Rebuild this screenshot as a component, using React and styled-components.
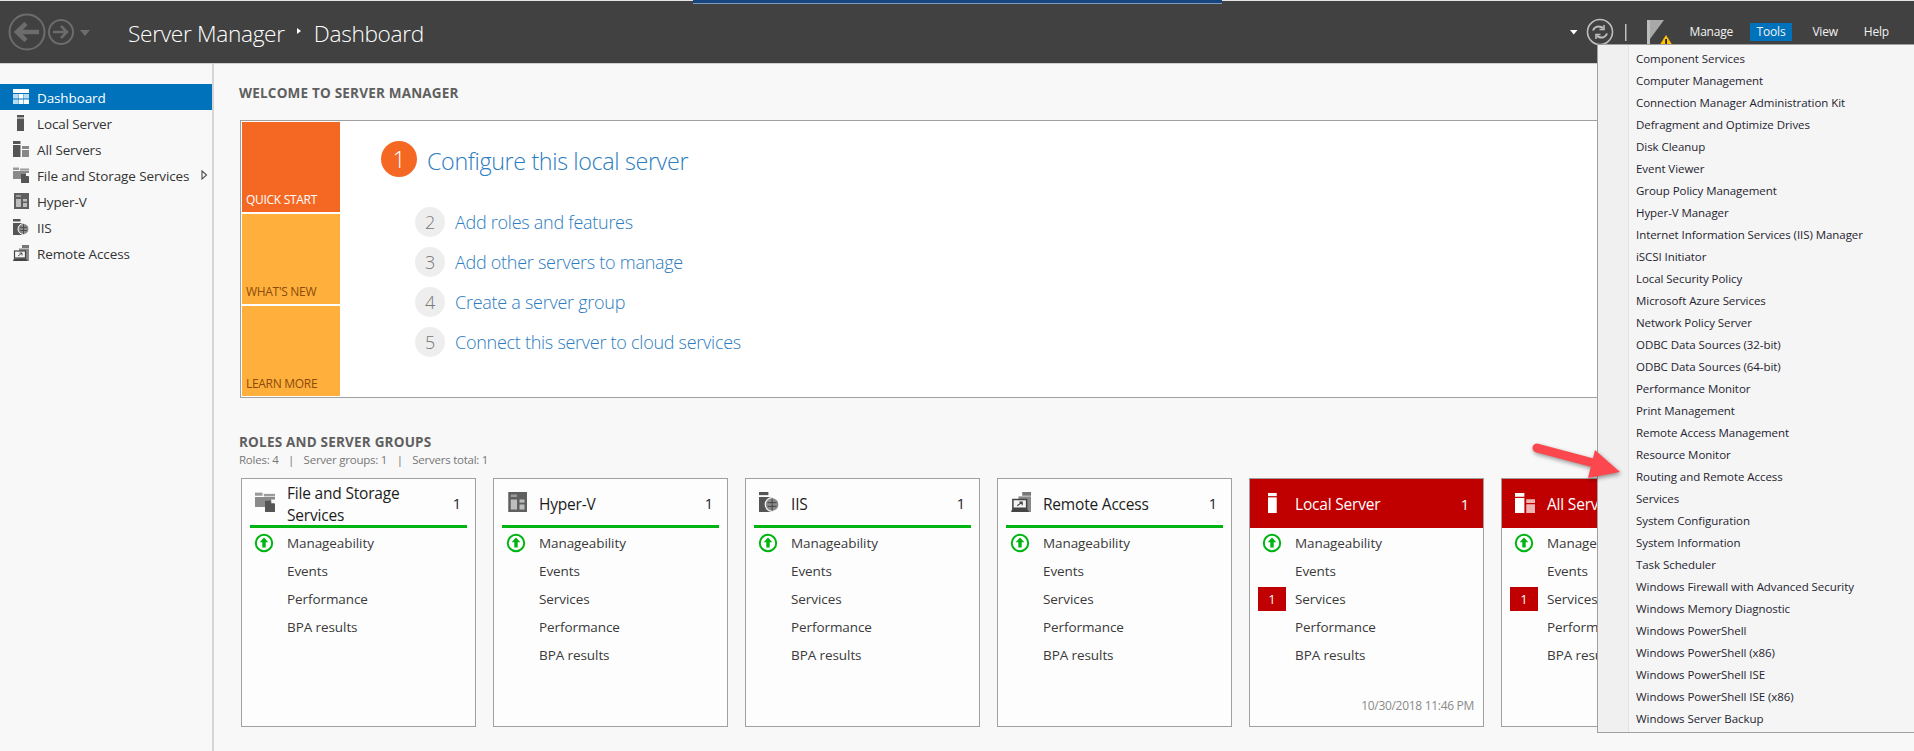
import React from "react";
import styled, { createGlobalStyle } from "styled-components";

const Global = createGlobalStyle`
  html, body { margin: 0; padding: 0; background: #f8f8f8; }
  body { font-family: "Open Sans", "Noto Sans", "Liberation Sans", sans-serif; overflow: hidden; }
`;

const Shell = styled.div`
  position: relative;
  width: 1914px;
  height: 751px;
  overflow: hidden;
  display: flex;
  flex-direction: column;
  background: #f8f8f8;
`;
const TitleStrip = styled.div`
  position: absolute;
  left: 693px;
  top: 0;
  width: 529px;
  height: 3px;
  background: #17457f;
  border-bottom: 1px solid #7f9cc0;
`;
const TopBar = styled.header`
  height: 62px;
  flex: none;
  display: flex;
  align-items: center;
  background: #414141;
  border-top: 1px solid #e4e4e4;
  border-bottom: 1px solid #d0d0d0;
`;
const NavGroup = styled.div`
  flex: none;
  width: 128px;
  height: 40px;
  svg { display: block; }
`;
const Crumbs = styled.div`
  display: flex;
  align-items: center;
  color: #fff;
  font-weight: 300;
  font-size: 22.7px;
  letter-spacing: -0.33px;
  margin-top: 2px;
`;
const CrumbArrow = styled.span`
  width: 0;
  height: 0;
  margin: -4px 13px 0 12px;
  border-left: 4px solid #fff;
  border-top: 3.5px solid transparent;
  border-bottom: 3.5px solid transparent;
`;
const RightTools = styled.div`
  margin-left: auto;
  display: flex;
  align-items: center;
  padding-right: 18px;
  svg { display: block; }
`;
const MenuButton = styled.span`
  height: 18px;
  line-height: 17px;
  padding: 0 7px;
  margin-left: ${(p) => p.$gap}px;
  font-size: 12px;
  letter-spacing: -0.2px;
  color: #f2f2f2;
  background: ${(p) => (p.$active ? "#0072bc" : "transparent")};
`;

const Body = styled.div`
  flex: 1;
  display: flex;
  min-height: 0;
`;
const Sidebar = styled.nav`
  flex: none;
  width: 212px;
  padding-top: 20px;
  background: #f8f8f8;
  border-right: 2px solid #d6d6d6;
`;
const NavItem = styled.div`
  height: 26px;
  display: flex;
  align-items: center;
  padding-left: 13px;
  gap: 8px;
  font-size: 13.5px;
  letter-spacing: -0.12px;
  color: ${(p) => (p.$active ? "#fff" : "#333")};
  background: ${(p) => (p.$active ? "#0072bc" : "transparent")};
`;
const NavIcon = styled.span`
  flex: none;
  width: 16px;
  height: 16px;
  svg { display: block; }
`;
const NavLabel = styled.span`
  margin-top: 1px;
`;
const Expand = styled.svg`
  margin-left: auto;
  margin-right: 4px;
  display: block;
`;

const Main = styled.main`
  flex: 1;
  min-width: 0;
  padding: 20px 0 0 25px;
`;
const SectionTitle = styled.h2`
  margin: 0;
  font-size: 13.5px;
  line-height: 18px;
  font-weight: 700;
  letter-spacing: 0.2px;
  color: #5f5f5f;
`;
const WelcomeBox = styled.section`
  margin: 18px 0 0 1px;
  width: 1640px;
  height: 278px;
  box-sizing: border-box;
  display: flex;
  background: #fff;
  border: 1px solid #a0a0a0;
  padding: 1px;
`;
const TileColumn = styled.div`
  flex: none;
  width: 98px;
  display: flex;
  flex-direction: column;
  gap: 2px;
`;
const Tile = styled.div`
  flex: 1;
  display: flex;
  align-items: flex-end;
  padding: 0 0 3px 4px;
  font-size: 12px;
  line-height: 18px;
  letter-spacing: -0.3px;
  color: ${(p) => (p.$primary ? "#fff" : "#8a4a0a")};
  background: ${(p) => (p.$primary ? "#f56823" : "#ffb03c")};
`;
const Steps = styled.div`
  padding: 19px 0 0 41px;
  display: flex;
  flex-direction: column;
`;
const LeadStep = styled.div`
  display: flex;
  align-items: center;
  gap: 10px;
  height: 36px;
  margin-bottom: 30px;
  font-size: 23.3px;
  font-weight: 300;
  letter-spacing: -0.35px;
  color: #2b7cc0;
`;
const LeadText = styled.span`
  margin-top: 3px;
`;
const LeadNum = styled.span`
  width: 36px;
  height: 36px;
  border-radius: 50%;
  display: flex;
  align-items: center;
  justify-content: center;
  background: #f56823;
  color: #fff;
`;
const SubStep = styled.div`
  display: flex;
  align-items: center;
  gap: 10px;
  height: 30px;
  margin: 0 0 10px 34px;
  font-size: 18px;
  font-weight: 300;
  letter-spacing: -0.27px;
  color: #2b7cc0;
`;
const SubNum = styled.span`
  width: 30px;
  height: 30px;
  border-radius: 50%;
  display: flex;
  align-items: center;
  justify-content: center;
  background: #eeeeee;
  color: #777;
  font-size: 18px;
`;
const GroupsHead = styled.div`
  margin-top: 35px;
`;
const GroupsSub = styled.div`
  display: flex;
  gap: 9.5px;
  font-size: 11.5px;
  line-height: 18px;
  letter-spacing: -0.24px;
  color: #777;
`;
const Cards = styled.div`
  margin: 9px 0 0 2px;
  display: flex;
  gap: 17px;
`;
const Card = styled.article`
  flex: none;
  width: 235px;
  height: 249px;
  box-sizing: border-box;
  display: flex;
  flex-direction: column;
  background: #fdfdfd;
  border: 1px solid #a0a0a0;
`;
const CardHead = styled.div`
  box-sizing: border-box;
  height: 49px;
  display: flex;
  align-items: center;
  margin: ${(p) => (p.$alert ? "0" : "0 8px")};
  padding: ${(p) => (p.$alert ? "1px 14px 0 13px" : "3px 6px 0 5px")};
  background: ${(p) => (p.$alert ? "#c00000" : "transparent")};
  border-bottom: ${(p) => (p.$alert ? "none" : "3px solid #00b512")};
  color: ${(p) => (p.$alert ? "#fff" : "#1c1c1c")};
`;
const CardIcon = styled.span`
  flex: none;
  width: 20px;
  height: 20px;
  margin: -3px 12px 0 0;
  svg { display: block; }
`;
const CardTitle = styled.div`
  flex: 1;
  font-size: 15.5px;
  line-height: 22px;
  letter-spacing: -0.2px;
`;
const CardCount = styled.span`
  font-size: 14.5px;
`;
const Row = styled.div`
  box-sizing: border-box;
  height: 28px;
  display: flex;
  align-items: center;
  padding: 1px 0 0 8px;
  gap: 9px;
  font-size: 13.5px;
  letter-spacing: -0.08px;
  color: #3a3a3a;
`;
const Slot = styled.span`
  flex: none;
  width: 28px;
  height: 24px;
  display: flex;
  align-items: center;
  justify-content: center;
  font-size: 13px;
  color: #fff;
  background: ${(p) => (p.$alert ? "#c00000" : "transparent")};
`;
const Stamp = styled.div`
  margin-top: auto;
  padding: 0 9px 12px 0;
  align-self: flex-end;
  font-size: 12px;
  letter-spacing: -0.3px;
  color: #8a8a8a;
`;
const ToolsMenu = styled.div`
  position: absolute;
  left: 1597px;
  top: 44px;
  right: 0;
  height: 689px;
  box-sizing: border-box;
  padding-top: 3px;
  border: 1px solid #a0a0a0;
  border-right: none;
  background: linear-gradient(to right, #f0f0f0 30px, #e2e2e2 30px, #e2e2e2 31px, #f5f5f5 31px);
`;
const ToolsItem = styled.div`
  height: 22px;
  line-height: 22px;
  padding-left: 38px;
  font-size: 11.5px;
  letter-spacing: -0.06px;
  color: #1f2430;
`;
const Pointer = styled.svg`
  position: absolute;
  left: 1525px;
  top: 440px;
  filter: drop-shadow(1px 2px 2px rgba(0,0,0,0.4));
`;

const svg16 = (children, size = 16) => (
  <svg width={size} height={size} viewBox="0 0 16 16">{children}</svg>
);

const GridIcon = () => svg16(
  <g fill="#fff">
    <rect x="0" y="0" width="16" height="4" />
    <g fill="#b8dcf2">
      <rect x="0" y="5" width="5" height="4.5" />
      <rect x="11" y="5" width="5" height="4.5" />
      <rect x="0" y="10.5" width="5" height="4.5" />
    </g>
    <rect x="5.5" y="5" width="5" height="4.5" />
    <rect x="5.5" y="10.5" width="5" height="4.5" />
    <rect x="11" y="10.5" width="5" height="4.5" />
  </g>
);
const LocalIcon = ({ c = "#555", size }) => svg16(
  <g fill={c}>
    <rect x="4" y="0" width="7" height="2.5" />
    <rect x="4" y="3.5" width="7" height="12.5" />
  </g>, size
);
const AllIcon = ({ c = "#555", c2 = "#888", size }) => svg16(
  <g>
    <rect x="0" y="0" width="7.5" height="3" fill={c} />
    <rect x="0" y="4" width="7.5" height="12" fill={c} />
    <rect x="9" y="5" width="7" height="3" fill={c2} />
    <rect x="9" y="9" width="7" height="7" fill={c2} />
  </g>, size
);
const StorageIcon = ({ size }) => svg16(
  <g>
    <rect x="0" y="0.5" width="6" height="2.5" fill="#9a9a9a" />
    <rect x="7" y="1.5" width="9" height="2" fill="#9a9a9a" />
    <rect x="0" y="4" width="16" height="8" fill="#8a8a8a" />
    <path d="M8 7h5l3 3v6H8z" fill="#555" />
    <rect x="13" y="6" width="3" height="3" fill="#f8f8f8" />
  </g>, size
);
const HyperIcon = ({ size }) => svg16(
  <g>
    <rect x="1" y="0" width="15" height="16" fill="#5f5f5f" />
    <rect x="3" y="2" width="5" height="2" fill="#9a9a9a" />
    <rect x="3" y="6" width="5" height="8" fill="#bdbdbd" />
    <rect x="10" y="6" width="4" height="2.5" fill="#bdbdbd" />
    <rect x="10" y="10" width="4" height="4" fill="#bdbdbd" />
  </g>, size
);
const IisIcon = ({ size }) => svg16(
  <g>
    <rect x="0" y="0" width="7.5" height="2.5" fill="#555" />
    <rect x="0" y="4" width="11" height="12" fill="#555" />
    <circle cx="10.5" cy="10" r="5.5" fill="#8a8a8a" stroke="#f8f8f8" strokeWidth="1" />
    <path d="M7 8.5h7M7 11.5h7M10.5 5v10" stroke="#444" strokeWidth="0.8" fill="none" />
  </g>, size
);
const RemoteIcon = ({ size }) => svg16(
  <g>
    <rect x="9" y="0" width="7" height="3" fill="#777" />
    <rect x="6" y="3.5" width="10" height="12.5" fill="#888" />
    <rect x="1.5" y="6" width="11" height="7" fill="#f4f4f4" stroke="#444" strokeWidth="1.2" />
    <path d="M5 11l4-3M6.5 8H9v2.5" stroke="#444" strokeWidth="0.9" fill="none" />
    <path d="M1 13.5h12l1.5 2.5H0z" fill="#444" />
  </g>, size
);
const UpIcon = () => (
  <svg width="20" height="20" viewBox="0 0 20 20">
    <circle cx="10" cy="10" r="8.2" fill="#fff" stroke="#00b512" strokeWidth="2" />
    <path d="M10 4.6l4.3 4.6h-2.6v5.2H8.3V9.2H5.7z" fill="#00b512" />
  </svg>
);

const navItems = [
  { label: "Dashboard", icon: <GridIcon />, active: true },
  { label: "Local Server", icon: <LocalIcon /> },
  { label: "All Servers", icon: <AllIcon /> },
  { label: "File and Storage Services", icon: <StorageIcon />, more: true },
  { label: "Hyper-V", icon: <HyperIcon /> },
  { label: "IIS", icon: <IisIcon /> },
  { label: "Remote Access", icon: <RemoteIcon /> },
];

const plain = ["Manageability", "Events", "Services", "Performance", "BPA results"];
const cards = [
  { title: "File and Storage Services", icon: <StorageIcon size={20} />, rows: ["Manageability", "Events", "Performance", "BPA results"] },
  { title: "Hyper-V", icon: <HyperIcon size={20} />, rows: plain },
  { title: "IIS", icon: <IisIcon size={20} />, rows: plain },
  { title: "Remote Access", icon: <RemoteIcon size={20} />, rows: plain },
  { title: "Local Server", icon: <LocalIcon c="#fff" size={20} />, rows: plain, alert: true, stamp: "10/30/2018 11:46 PM" },
  { title: "All Servers", icon: <AllIcon c="#fff" c2="#eeb4b4" size={20} />, rows: plain, alert: true, stamp: "10/30/2018 11:46 PM" },
];

const tools = [
  "Component Services", "Computer Management", "Connection Manager Administration Kit",
  "Defragment and Optimize Drives", "Disk Cleanup", "Event Viewer", "Group Policy Management",
  "Hyper-V Manager", "Internet Information Services (IIS) Manager", "iSCSI Initiator",
  "Local Security Policy", "Microsoft Azure Services", "Network Policy Server",
  "ODBC Data Sources (32-bit)", "ODBC Data Sources (64-bit)", "Performance Monitor",
  "Print Management", "Remote Access Management", "Resource Monitor", "Routing and Remote Access",
  "Services", "System Configuration", "System Information", "Task Scheduler",
  "Windows Firewall with Advanced Security", "Windows Memory Diagnostic", "Windows PowerShell",
  "Windows PowerShell (x86)", "Windows PowerShell ISE", "Windows PowerShell ISE (x86)", "Windows Server Backup",
];

const subSteps = [
  [2, "Add roles and features"],
  [3, "Add other servers to manage"],
  [4, "Create a server group"],
  [5, "Connect this server to cloud services"],
];

export default function App() {
  return (
    <Shell>
      <Global />
      <TitleStrip />
      <TopBar>
        <NavGroup>
          <svg width="100" height="40" viewBox="0 0 100 40">
            <g fill="none" stroke="#6c6c6c" strokeWidth="2">
              <circle cx="27" cy="20" r="17.5" />
              <circle cx="61" cy="20" r="12" />
            </g>
            <path d="M39 20H17M26 11.5L17 20l9 8.5" fill="none" stroke="#6c6c6c" strokeWidth="4.5" />
            <path d="M53 20h14M61 14l6 6-6 6" fill="none" stroke="#6c6c6c" strokeWidth="2.6" />
            <path d="M80 18h10l-5 6z" fill="#6c6c6c" />
          </svg>
        </NavGroup>
        <Crumbs>
          <span>Server Manager</span>
          <CrumbArrow />
          <span>Dashboard</span>
        </Crumbs>
        <RightTools>
          <svg width="113" height="40" viewBox="0 0 113 40">
            <path d="M0 18h7.5l-3.75 4.5z" fill="#fff" />
            <circle cx="30" cy="20" r="12.5" fill="none" stroke="#bdbdbd" strokeWidth="1.6" />
            <path d="M23 18.5c1-3.5 5-5 8-3.5l2 1M37 21.5c-1 3.5-5 5-8 3.5l-2-1" fill="none" stroke="#bdbdbd" strokeWidth="2" />
            <path d="M34 13v4.5h-4.5M26 27v-4.5h4.5" fill="none" stroke="#bdbdbd" strokeWidth="1.6" />
            <rect x="55" y="12" width="1.5" height="17" fill="#bdbdbd" />
            <rect x="77" y="8" width="3" height="24" fill="#bdbdbd" />
            <path d="M80 8h14L80 27z" fill="#a8a8a8" />
            <path d="M96 23l7 11H89z" fill="#ffc000" />
            <rect x="95.2" y="27" width="1.8" height="6" fill="#222" />
          </svg>
          <MenuButton $gap={0}>Manage</MenuButton>
          <MenuButton $gap={9.5} $active>Tools</MenuButton>
          <MenuButton $gap={13}>View</MenuButton>
          <MenuButton $gap={12}>Help</MenuButton>
        </RightTools>
      </TopBar>
      <Body>
        <Sidebar>
          {navItems.map((n) => (
            <NavItem key={n.label} $active={n.active}>
              <NavIcon>{n.icon}</NavIcon>
              <NavLabel>{n.label}</NavLabel>
              {n.more && (
                <Expand width="7" height="10" viewBox="0 0 7 10">
                  <path d="M1 1l4.5 4L1 9z" fill="#fff" stroke="#555" strokeWidth="1.2" />
                </Expand>
              )}
            </NavItem>
          ))}
        </Sidebar>
        <Main>
          <SectionTitle>WELCOME TO SERVER MANAGER</SectionTitle>
          <WelcomeBox>
            <TileColumn>
              <Tile $primary>QUICK START</Tile>
              <Tile>WHAT'S NEW</Tile>
              <Tile>LEARN MORE</Tile>
            </TileColumn>
            <Steps>
              <LeadStep>
                <LeadNum>1</LeadNum>
                <LeadText>Configure this local server</LeadText>
              </LeadStep>
              {subSteps.map(([n, t]) => (
                <SubStep key={n}>
                  <SubNum>{n}</SubNum>
                  {t}
                </SubStep>
              ))}
            </Steps>
          </WelcomeBox>
          <GroupsHead>
            <SectionTitle>ROLES AND SERVER GROUPS</SectionTitle>
            <GroupsSub>
              <span>Roles: 4</span><span>|</span>
              <span>Server groups: 1</span><span>|</span>
              <span>Servers total: 1</span>
            </GroupsSub>
          </GroupsHead>
          <Cards>
            {cards.map((c) => (
              <Card key={c.title}>
                <CardHead $alert={c.alert}>
                  <CardIcon>{c.icon}</CardIcon>
                  <CardTitle>{c.title}</CardTitle>
                  <CardCount>1</CardCount>
                </CardHead>
                {c.rows.map((r, i) => {
                  const bad = c.alert && r === "Services";
                  return (
                    <Row key={r}>
                      <Slot $alert={bad}>{i === 0 ? <UpIcon /> : bad ? "1" : null}</Slot>
                      {r}
                    </Row>
                  );
                })}
                {c.stamp && <Stamp>{c.stamp}</Stamp>}
              </Card>
            ))}
          </Cards>
        </Main>
      </Body>
      <ToolsMenu>
        {tools.map((t) => <ToolsItem key={t}>{t}</ToolsItem>)}
      </ToolsMenu>
      <Pointer width="100" height="45" viewBox="0 0 100 45">
        <path d="M12 8L76 25" stroke="#fb474d" strokeWidth="9" strokeLinecap="round" fill="none" />
        <path d="M70 10L95 32L63 38z" fill="#fb474d" />
      </Pointer>
    </Shell>
  );
}
